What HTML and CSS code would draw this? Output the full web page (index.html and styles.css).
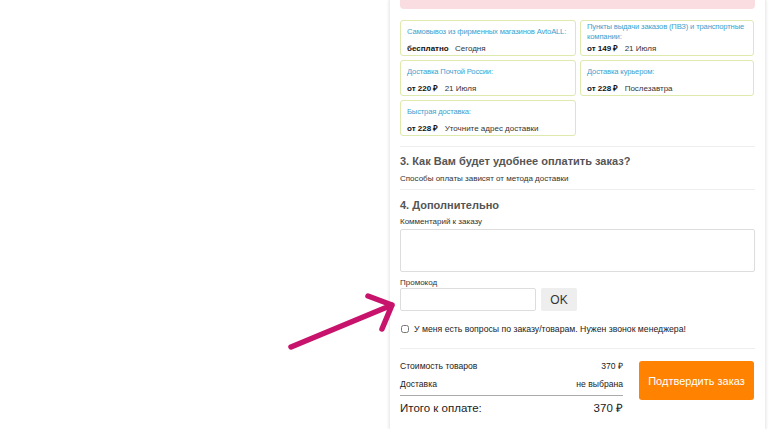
FILE: index.html
```html
<!DOCTYPE html>
<html lang="ru">
<head>
    <meta charset="UTF-8">
    <meta name="viewport" content="width=device-width, initial-scale=1.0">
    <title>Оформление заказа</title>
    <link rel="stylesheet" href="styles.css">
</head>
<body>

    <div class="page">
        <!-- Pointer arrow drawn over the page -->
        <svg class="arrow" width="130" height="80" viewBox="0 0 130 80">
            <path d="M9 64 L110 22 M86 13 L110 22 M100 46 L110 22" fill="none" stroke="#c8136c" stroke-width="5.5" stroke-linecap="round" stroke-linejoin="round"/>
        </svg>

        <div class="checkout">
            <div class="alert">Выберите способ доставки</div>

            <!-- Delivery options -->
            <div class="delivery">
                <div class="option">
                    <div class="option-title">Самовывоз из фирменных магазинов AvtoALL:</div>
                    <div class="option-price"><b>бесплатно</b> Сегодня</div>
                </div>
                <div class="option">
                    <div class="option-title">Пункты выдачи заказов (ПВЗ) и транспортные компании:</div>
                    <div class="option-price"><b>от 149 ₽</b> 21 Июля</div>
                </div>
                <div class="option">
                    <div class="option-title">Доставка Почтой России:</div>
                    <div class="option-price"><b>от 220 ₽</b> 21 Июля</div>
                </div>
                <div class="option">
                    <div class="option-title">Доставка курьером:</div>
                    <div class="option-price"><b>от 228 ₽</b> Послезавтра</div>
                </div>
                <div class="option">
                    <div class="option-title">Быстрая доставка:</div>
                    <div class="option-price"><b>от 228 ₽</b> Уточните адрес доставки</div>
                </div>
            </div>

            <hr class="divider first">

            <h3>3. Как Вам будет удобнее оплатить заказ?</h3>
            <p class="note">Способы оплаты зависят от метода доставки</p>

            <hr class="divider">

            <h3 class="extra">4. Дополнительно</h3>
            <label class="field-label" for="comment">Комментарий к заказу</label>
            <textarea id="comment" class="comment"></textarea>

            <label class="field-label promo-label" for="promo">Промокод</label>
            <div class="promo">
                <input type="text" id="promo" class="promo-input">
                <button class="promo-btn">OK</button>
            </div>

            <label class="callback">
                <input type="checkbox">
                <span>У меня есть вопросы по заказу/товарам. Нужен звонок менеджера!</span>
            </label>

            <hr class="divider last">

            <!-- Totals -->
            <div class="summary">
                <div class="totals">
                    <div class="row"><span>Стоимость товаров</span><span>370 ₽</span></div>
                    <div class="row delivery-row"><span>Доставка</span><span>не выбрана</span></div>
                    <div class="row total"><span>Итого к оплате:</span><span>370 ₽</span></div>
                </div>
                <button class="confirm">Подтвердить заказ</button>
            </div>
        </div>
    </div>

</body>
</html>
```

FILE: styles.css
```css
body {
    margin: 0;
    background: #fff;
    font-family: "Liberation Sans", Arial, sans-serif;
    color: #222;
    overflow: hidden;
}
.page {
    position: relative;
    display: flex;
    height: 429px;
    padding-left: 389px;
}
.arrow {
    position: absolute;
    left: 282px;
    top: 283px;
}
.checkout {
    width: 355px;
    padding: 0 10px 0 10px;
    background: #fff;
    box-shadow: 0 0 3px rgba(0, 0, 0, 0.12);
    border-left: 1px solid #eee;
    border-right: 1px solid #eee;
}
.alert {
    margin-top: -14px;
    height: 23px;
    background: #f9dde0;
    border-radius: 0 0 4px 4px;
    font-size: 8px;
    line-height: 12px;
    padding: 0 12px;
    color: #555;
}
.delivery {
    margin-top: 11px;
    display: grid;
    grid-template-columns: 176px 174px;
    gap: 4px;
}
.option {
    height: 34px;
    border: 1px solid #dde9ad;
    border-radius: 3px;
    padding: 0 6px;
}
.option-title {
    height: 22px;
    display: flex;
    align-items: center;
    color: #3a9fd0;
    font-size: 7.6px;
    letter-spacing: -0.15px;
    line-height: 10px;
}
.option-price {
    font-size: 8px;
    line-height: 11px;
    color: #333;
}
.option-price b {
    color: #111;
    margin-right: 4px;
}
.divider {
    border: none;
    border-top: 1px solid #eee;
    margin: 4px 0 0 0;
}
.divider.first {
    margin-top: 10px;
}
h3 {
    margin: 7px 0 0 0;
    font-size: 11px;
    line-height: 14px;
    color: #555;
}
h3.extra {
    margin-top: 8px;
}
.note {
    margin: 5px 0 0 0;
    font-size: 8px;
    line-height: 12px;
    color: #333;
}
.field-label {
    display: block;
    margin-top: 4px;
    font-size: 8px;
    line-height: 12px;
    color: #333;
}
.comment {
    display: block;
    box-sizing: border-box;
    width: 100%;
    height: 43px;
    margin-top: 1px;
    border: 1px solid #ddd;
    border-radius: 2px;
    resize: none;
}
.promo-label {
    margin-top: 6px;
    line-height: 10px;
}
.promo {
    display: flex;
    gap: 5px;
}
.promo-input {
    box-sizing: border-box;
    width: 136px;
    height: 23px;
    border: 1px solid #ddd;
    border-radius: 2px;
}
.promo-btn {
    width: 36px;
    height: 23px;
    border: none;
    border-radius: 2px;
    background: #eee;
    font-family: "Liberation Sans", Arial, sans-serif;
    font-size: 12px;
    color: #333;
}
.callback {
    display: flex;
    align-items: center;
    gap: 5px;
    margin-top: 12px;
    font-size: 8.7px;
    line-height: 12px;
    color: #222;
}
.callback input {
    margin: 0 0 0 1px;
    width: 8px;
    height: 8px;
}
.divider.last {
    margin-top: 13px;
}
.summary {
    display: flex;
    gap: 16px;
    align-items: flex-start;
}
.totals {
    width: 223px;
    margin-top: 10px;
}
.row {
    display: flex;
    justify-content: space-between;
    font-size: 8.6px;
    line-height: 14px;
    color: #222;
}
.delivery-row {
    margin-top: 4px;
    padding-bottom: 4px;
    border-bottom: 1px solid #aaa;
}
.row.total {
    margin-top: 4px;
    font-size: 11.5px;
    line-height: 16px;
}
.confirm {
    margin-top: 12px;
    width: 115px;
    height: 39px;
    border: none;
    border-radius: 3px;
    background: #ff8200;
    color: #fff;
    font-family: "Liberation Sans", Arial, sans-serif;
    font-size: 11px;
}
```
